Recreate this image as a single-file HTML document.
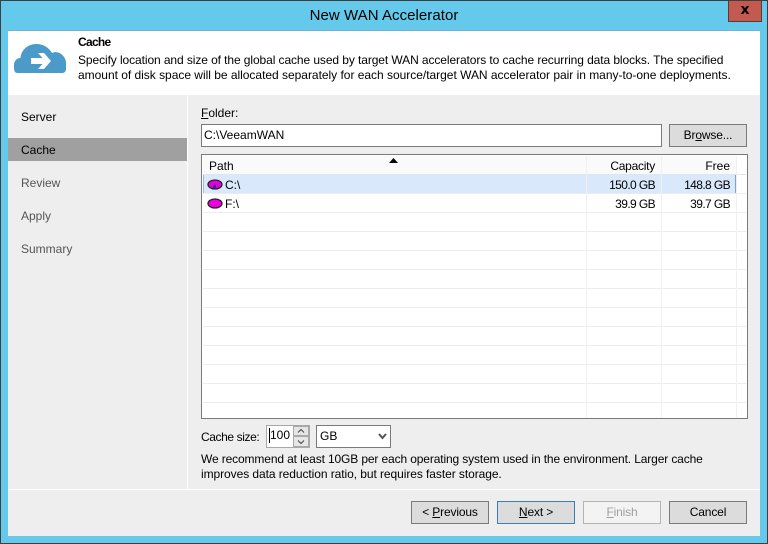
<!DOCTYPE html>
<html><head><meta charset="utf-8"><style>
html,body{margin:0;padding:0;width:768px;height:544px;overflow:hidden;background:#65c9eb}
body{position:relative;font:12px/16px "Liberation Sans",sans-serif;color:#000}
div,span.t{position:absolute;box-sizing:border-box}
.t{white-space:nowrap}
.btn{background:#dcdcdc;border:1px solid #7a7a7a;text-align:center;line-height:20px;height:23px;width:78px;top:501px;letter-spacing:-.15px}
.hl{left:203px;width:543px;height:1px;background:#ececec}
.vl{top:156px;width:1px;height:261px;background:#f0f0f0}
.n{letter-spacing:-.6px}
u{text-decoration:underline}
</style></head><body>
<div style="left:0;top:0;width:768px;height:544px;border:1px solid #3c3f41"></div>
<span class="t" style="left:0;width:768px;top:6px;text-align:center;font-size:15px;line-height:20px;letter-spacing:.05px">New WAN Accelerator</span>
<div style="left:728px;top:1px;width:34px;height:21px;background:#c35a50;border:1px solid #5a3a38;border-top:0;text-align:center;font:bold 14px/18px 'DejaVu Sans',sans-serif">x</div>
<div style="left:8px;top:30px;width:752px;height:1px;background:#6fb3d2"></div>
<div style="left:8px;top:31px;width:752px;height:505px;background:#eee"></div>
<div style="left:8px;top:31px;width:752px;height:64px;background:#fff"></div>

<svg style="position:absolute;left:14px;top:43px" width="52" height="31" viewBox="0 0 52 31"><path d="M3.500 30C1 30 0 28 0 25V22C0 18 3 15 6.500 15C7 7 14 1 22 1C30 1 35 5 38 10C40 9 42 9 44 9.500C48 10.500 52 15 52 20V26C52 28.500 50.500 30 48 30Z" fill="#4b9ac9"/><path d="M24 10H30L37 18L30 26H24L28.500 21H17V15H28.500Z" fill="#fff"/></svg>

<span class="t" style="left:78px;top:34px;font-weight:bold;letter-spacing:-.7px">Cache</span>
<span class="t" style="left:78px;top:52px;letter-spacing:-.09px">Specify location and size of the global cache used by target WAN accelerators to cache recurring data blocks. The specified</span>
<span class="t" style="left:78px;top:67px;letter-spacing:-.02px">amount of disk space will be allocated separately for each source/target WAN accelerator pair in many-to-one deployments.</span>

<div style="left:187px;top:95px;width:1px;height:394px;background:#fff"></div>
<div style="left:8px;top:138px;width:179px;height:23px;background:#a0a0a0"></div>
<span class="t" style="left:21px;top:109px">Server</span>
<span class="t" style="left:21px;top:142px">Cache</span>
<span class="t" style="left:21px;top:175px;color:#555">Review</span>
<span class="t" style="left:21px;top:208px;color:#555">Apply</span>
<span class="t" style="left:21px;top:241px;color:#555">Summary</span>

<span class="t" style="left:201px;top:105px"><u>F</u>older:</span>
<div style="left:201px;top:124px;width:461px;height:23px;background:#fff;border:1px solid #7a7a7a"></div>
<span class="t" style="left:204px;top:127px">C:\VeeamWAN</span>
<div class="btn" style="left:669px;top:124px">Br<u>o</u>wse...</div>

<div style="left:201px;top:154px;width:547px;height:265px;background:#fff;border:1px solid #7a7a7a"></div>
<div style="left:203px;top:156px;width:533px;height:18px;background:#fafafa"></div>
<div style="left:203px;top:175px;width:533px;height:18px;background:#d9e8fb"></div>
<div style="left:203px;top:175px;width:1px;height:18px;background:#9fbcdc"></div>
<div style="left:735px;top:175px;width:1px;height:18px;background:#7fa3cc"></div>
<div class="hl" style="top:174px;background:#e4e4e4"></div>
<div class="hl" style="top:193px"></div><div class="hl" style="top:212px"></div><div class="hl" style="top:231px"></div><div class="hl" style="top:250px"></div><div class="hl" style="top:269px"></div><div class="hl" style="top:288px"></div><div class="hl" style="top:307px"></div><div class="hl" style="top:326px"></div><div class="hl" style="top:345px"></div><div class="hl" style="top:364px"></div><div class="hl" style="top:383px"></div><div class="hl" style="top:402px"></div>
<div class="vl" style="left:586px"></div><div class="vl" style="left:661px"></div><div class="vl" style="left:736px"></div>
<svg style="position:absolute;left:389px;top:158px" width="9" height="5"><path d="M0 5L4.500 0L9 5Z" fill="#000"/></svg>
<span class="t" style="left:209px;top:158px">Path</span>
<span class="t" style="right:113px;top:158px;letter-spacing:-.25px">Capacity</span>
<span class="t" style="right:38px;top:158px">Free</span>

<svg style="position:absolute;left:207px;top:179px" width="16" height="11"><ellipse cx="8" cy="5.500" rx="7" ry="4.500" fill="#e600d8" stroke="#222" stroke-width="1.300"/><path d="M6 9V6.500L9 5.500V9Z" fill="#2a2ab0"/></svg>
<span class="t" style="left:225px;top:177px">C:\</span>
<span class="t n" style="right:113px;top:177px">150.0 GB</span>
<span class="t n" style="right:38px;top:177px">148.8 GB</span>
<svg style="position:absolute;left:207px;top:198px" width="16" height="11"><ellipse cx="8" cy="5.500" rx="7" ry="4.500" fill="#f000e0" stroke="#222" stroke-width="1.300"/></svg>
<span class="t" style="left:225px;top:196px">F:\</span>
<span class="t n" style="right:113px;top:196px">39.9 GB</span>
<span class="t n" style="right:38px;top:196px">39.7 GB</span>

<span class="t" style="left:201px;top:429px;letter-spacing:-.4px">Cache size:</span>
<div style="left:266px;top:425px;width:44px;height:23px;background:#fff;border:1px solid #a8a8a8"></div>
<div style="left:269px;top:428px;width:1px;height:15px;background:#000"></div>
<span class="t" style="left:270px;top:427px">100</span>
<div style="left:293px;top:426px;width:16px;height:10px;background:#e6e6e6;border:1px solid #a8a8a8"></div>
<div style="left:293px;top:436px;width:16px;height:11px;background:#e6e6e6;border:1px solid #a8a8a8"></div>
<svg style="position:absolute;left:293px;top:426px" width="16" height="21" fill="none" stroke="#444"><path d="M5 6.500L8 3.500L11 6.500M5 14.500L8 17.500L11 14.500"/></svg>
<div style="left:316px;top:425px;width:75px;height:23px;background:#fff;border:1px solid #7a7a7a"></div>
<span class="t" style="left:320px;top:428px">GB</span>
<svg style="position:absolute;left:378px;top:433px" width="9" height="7" fill="none" stroke="#555" stroke-width="2"><path d="M1 1L4.500 5L8 1"/></svg>

<span class="t" style="left:201px;top:451px;letter-spacing:-.13px">We recommend at least 10GB per each operating system used in the environment. Larger cache</span>
<span class="t" style="left:201px;top:466px;letter-spacing:-.07px">improves data reduction ratio, but requires faster storage.</span>

<div style="left:8px;top:489px;width:752px;height:1px;background:#fff"></div>
<div class="btn" style="left:411px">&lt; <u>P</u>revious</div>
<div class="btn" style="left:497px;border-color:#3d7fb0"><u>N</u>ext &gt;</div>
<div class="btn" style="left:583px;background:#f3f3f3;border-color:#b4b4b4;color:#a0a0a0"><u>F</u>inish</div>
<div class="btn" style="left:669px">Cancel</div>
</body></html>
